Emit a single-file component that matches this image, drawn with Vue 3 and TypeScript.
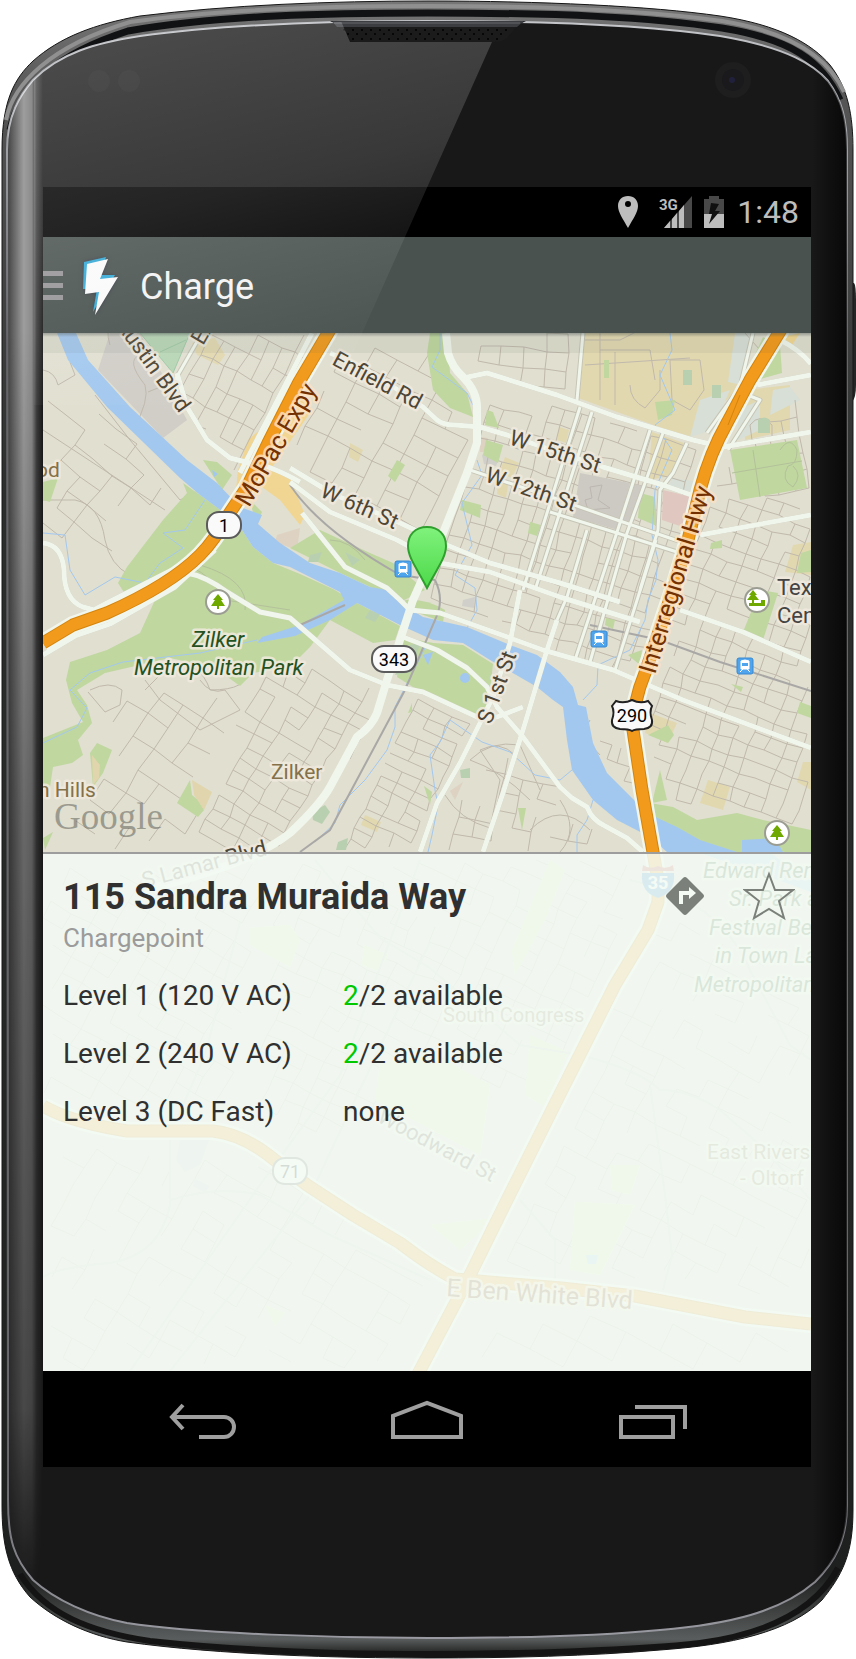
<script setup lang="ts">
import { ref } from 'vue'

type Point = [number, number]

interface District {
  outline: Point[]
  angle: number
  across: number
  down: number
  density: number
}

interface MapLabel {
  text: string
  x: number
  y: number
  turn?: number
  size?: number
  kind: 'road' | 'highway' | 'park' | 'area' | 'place'
}

interface ChargerLevel {
  name: string
  free: number
  total: number
}

const station = { title: '115 Sandra Muraida Way', network: 'Chargepoint' }
const levels: ChargerLevel[] = [
  { name: 'Level 1 (120 V AC)', free: 2, total: 2 },
  { name: 'Level 2 (240 V AC)', free: 2, total: 2 },
  { name: 'Level 3 (DC Fast)', free: 0, total: 0 },
]
const favourite = ref(false)

const districts: District[] = [
  { outline: [[188, 333], [328, 333], [238, 478], [176, 410]], angle: 28, across: 14, down: 22, density: 0.88 },
  { outline: [[326, 340], [428, 350], [474, 420], [474, 470], [440, 545], [290, 468]], angle: 27, across: 25, down: 20, density: 0.82 },
  { outline: [[462, 333], [583, 333], [577, 400], [480, 375]], angle: 5, across: 22, down: 18, density: 0.85 },
  { outline: [[480, 385], [700, 445], [686, 540], [640, 680], [545, 652], [420, 600], [450, 520]], angle: 17, across: 15, down: 17, density: 0.9 },
  { outline: [[700, 500], [811, 485], [811, 830], [665, 800], [643, 720], [676, 590]], angle: 20, across: 17, down: 15, density: 0.86 },
  { outline: [[725, 450], [811, 385], [811, 500], [700, 500]], angle: -10, across: 15, down: 18, density: 0.8 },
  { outline: [[412, 692], [476, 718], [415, 852], [330, 852]], angle: 26, across: 19, down: 12, density: 0.82 },
  { outline: [[470, 780], [520, 740], [600, 830], [600, 852], [440, 852]], angle: 12, across: 19, down: 17, density: 0.6 },
  { outline: [[290, 655], [384, 690], [372, 730], [280, 852], [190, 852], [240, 690]], angle: 30, across: 19, down: 14, density: 0.8 },
  { outline: [[100, 690], [235, 690], [215, 780], [190, 852], [43, 852], [110, 760]], angle: 34, across: 24, down: 26, density: 0.68 },
  { outline: [[43, 400], [80, 380], [180, 490], [125, 570], [43, 530]], angle: 38, across: 24, down: 20, density: 0.66 },
  { outline: [[590, 725], [628, 735], [645, 800], [610, 770]], angle: 16, across: 12, down: 16, density: 0.8 },
  { outline: [[43, 870], [270, 853], [240, 1115], [43, 1100]], angle: 30, across: 22, down: 19, density: 0.75 },
  { outline: [[280, 860], [640, 860], [620, 940], [560, 1070], [300, 1150], [250, 1110]], angle: 25, across: 21, down: 17, density: 0.72 },
  { outline: [[43, 1140], [260, 1155], [430, 1275], [400, 1371], [43, 1371]], angle: 30, across: 25, down: 22, density: 0.6 },
  { outline: [[670, 890], [811, 1000], [811, 1300], [480, 1270], [560, 1110]], angle: 27, across: 24, down: 21, density: 0.6 },
  { outline: [[480, 1295], [811, 1335], [811, 1371], [440, 1371]], angle: 28, across: 38, down: 30, density: 0.7 },
]

function contains(outline: Point[], x: number, y: number): boolean {
  let inside = false
  for (let i = 0, j = outline.length - 1; i < outline.length; j = i++) {
    const [xi, yi] = outline[i]
    const [xj, yj] = outline[j]
    if (yi > y !== yj > y && x < ((xj - xi) * (y - yi)) / (yj - yi) + xi) inside = !inside
  }
  return inside
}

// Street blocks: a turned grid whose crossings are shifted slightly and some of whose sides are left out.
function streetPath(d: District, seed: number): string {
  let state = seed * 7919 + 17
  const random = () => {
    state = (state * 1103515245 + 12345) % 2147483648
    return state / 2147483648
  }
  const xs = d.outline.map((p) => p[0])
  const ys = d.outline.map((p) => p[1])
  const cx = (Math.min(...xs) + Math.max(...xs)) / 2
  const cy = (Math.min(...ys) + Math.max(...ys)) / 2
  const reach = Math.max(Math.max(...xs) - Math.min(...xs), Math.max(...ys) - Math.min(...ys))
  const cols = Math.ceil(reach / d.across)
  const rows = Math.ceil(reach / d.down)
  const a = (d.angle * Math.PI) / 180
  const nodes: Point[][] = []
  for (let r = -rows; r <= rows; r++) {
    const line: Point[] = []
    for (let c = -cols; c <= cols; c++) {
      const u = c * d.across + (random() - 0.5) * 3
      const v = r * d.down + (random() - 0.5) * 3
      line.push([
        Math.round(cx + u * Math.cos(a) - v * Math.sin(a)),
        Math.round(cy + u * Math.sin(a) + v * Math.cos(a)),
      ])
    }
    nodes.push(line)
  }
  const parts: string[] = []
  const join = (p: Point, q: Point | undefined) => {
    if (!q || random() > d.density) return
    if (contains(d.outline, ...p) && contains(d.outline, ...q)) parts.push(`M${p[0]} ${p[1]}L${q[0]} ${q[1]}`)
  }
  nodes.forEach((line, r) =>
    line.forEach((p, c) => {
      join(p, line[c + 1])
      join(p, nodes[r + 1]?.[c])
    }),
  )
  return parts.join('')
}

const streets = districts.map((d, i) => streetPath(d, i + 1))

const mainRoads: string[] = [
  'M480 427L507 435L603 467L663 485L697 497',
  'M330 353L360 366L398 390L423 407L437 420Q443 425 455 425L480 427',
  'M463 378L487 373L557 395L617 417L693 440L723 447L811 432',
  'M290 468L333 494L400 523L447 545L490 563L560 583L620 602',
  'M290 482L330 512L397 540L440 563L490 572L560 597L640 622',
  'M302 513L345 567L387 588L400 600L410 610L440 613L510 638L543 650L613 670L683 700L811 748',
  'M403 637L437 650L467 668L487 687L497 707L523 737L560 787L572 798L587 807Q592 820 605 826L627 838L643 852',
  'M523 707L497 717H477L423 692L387 685L350 670L290 618L260 612L227 592Q205 576 187 573L172 578',
  'M520 590L510 643L493 697L480 723L460 763L437 803L420 852',
  'M557 620L547 650L523 730L503 793L483 852',
  'M680 610L743 632L811 662M700 535L811 515M757 385L811 375M780 340Q800 350 811 364',
  'M177 373L187 407L207 440L230 458L250 463Q270 465 300 482',
  'M312 333L240 473M43 543Q62 545 64 570Q64 600 83 607L105 613M43 637L105 604L172 570',
  'M43 655L75 636L110 624L175 587L215 550',
]

const cityRoads: string[] = [
  'M470 470L560 500L617 520L690 545M550 512L617 533L677 552',
  'M580 407L523 590M592 412L535 590M583 333L577 400',
  'M587 530L567 597L557 620M650 430L620 523L575 660M663 433L627 533L590 662M656 540L615 670',
  'M753 333L740 387L707 433M687 443L673 473L660 490L658 530L640 590',
  'M720 435L700 498M735 390L760 400L728 450',
  'M202 333L175 380',
]

const labels: MapLabel[] = [
  { text: 'Austin Blvd', x: 115, y: 325, turn: 54, kind: 'road' },
  { text: 'Ex', x: 203, y: 346, turn: -60, kind: 'road' },
  { text: 'MoPac Expy', x: 249, y: 508, turn: -60, size: 25, kind: 'highway' },
  { text: 'Enfield Rd', x: 331, y: 364, turn: 28, kind: 'road' },
  { text: 'W 15th St', x: 508, y: 444, turn: 18, kind: 'road' },
  { text: 'W 12th St', x: 484, y: 481, turn: 19, kind: 'road' },
  { text: 'W 6th St', x: 319, y: 496, turn: 24, kind: 'road' },
  { text: 'S 1st St', x: 491, y: 725, turn: -70, kind: 'road' },
  { text: 'Interregional Hwy', x: 655, y: 675, turn: -73, size: 25, kind: 'highway' },
  { text: 'S Lamar Blvd', x: 144, y: 888, turn: -15, kind: 'road' },
  { text: 'Zilker', x: 192, y: 647, kind: 'park' },
  { text: 'Metropolitan Park', x: 134, y: 675, kind: 'park' },
  { text: 'Zilker', x: 271, y: 779, size: 21, kind: 'area' },
  { text: 'n Hills', x: 38, y: 797, size: 21, kind: 'area' },
  { text: 'od', x: 36, y: 477, size: 21, kind: 'area' },
  { text: 'Tex', x: 777, y: 595, kind: 'place' },
  { text: 'Cen', x: 777, y: 623, kind: 'place' },
  { text: 'Edward Ren', x: 703, y: 878, kind: 'park' },
  { text: 'Sr. Park a', x: 729, y: 906, kind: 'park' },
  { text: 'Festival Be', x: 709, y: 935, kind: 'park' },
  { text: 'in Town La', x: 715, y: 963, kind: 'park' },
  { text: 'Metropolitan', x: 694, y: 992, kind: 'park' },
  { text: 'South Congress', x: 443, y: 1022, size: 20, kind: 'area' },
  { text: 'East Riversi', x: 707, y: 1159, size: 21, kind: 'area' },
  { text: '- Oltorf', x: 740, y: 1185, size: 21, kind: 'area' },
  { text: 'Woodward St', x: 376, y: 1121, turn: 28, kind: 'road' },
  { text: 'E Ben White Blvd', x: 446, y: 1296, turn: 4, size: 25, kind: 'highway' },
]

const trainStops: Point[] = [[403, 569], [599, 639], [745, 666]]
const parkPins: Point[] = [[218, 602], [777, 833]]

const highways: string[] = [
  'M331 328L299 382L268 443L247 487L227 517Q215 540 200 555Q170 585 107 613L73 625L43 643',
  'M782 328L750 380L727 423Q710 453 700 490L688 540L673 590L645 673Q633 702 633 730L642 790L653 852L658 880V902L648 930L615 985L555 1104L508 1198L468 1279L418 1374',
  'M43 1106Q70 1122 127 1131H213Q240 1134 267 1154L307 1185L353 1215L400 1243Q430 1266 455 1279L561 1288L635 1296L745 1317L811 1324',
]

const outerShell =
  'M2 150C2 100 15 78 33 61C60 37 95 24 140 16C230 5 330 1 428 1C540 1 650 6 720 16C780 25 812 44 830 65C848 88 853 115 853 150V1510C853 1555 842 1575 822 1600C790 1632 730 1645 660 1650C590 1656 510 1658 428 1658C340 1658 220 1655 127 1642C90 1636 55 1620 30 1597C8 1572 2 1545 2 1505Z'
const glass =
  'M7 150C7 115 20 95 33 80C60 53 95 43 140 36C220 25 327 21 428 21C560 21 660 27 720 36C790 48 815 66 828 81C842 100 847 120 847 150V1505C847 1540 835 1562 815 1582C780 1612 730 1624 660 1630C590 1637 510 1638 428 1638C340 1638 200 1634 127 1623C90 1616 55 1600 33 1580C14 1558 8 1540 8 1500Z'
</script>

<template>
  <main class="phone">
    <svg class="case" viewBox="0 0 856 1659" preserveAspectRatio="none" aria-hidden="true">
      <defs>
        <linearGradient id="rim" gradientUnits="userSpaceOnUse" x1="0" y1="0" x2="0" y2="1659">
          <stop offset="0" stop-color="#777" />
          <stop offset="0.06" stop-color="#555" />
          <stop offset="0.3" stop-color="#2c2d2d" />
          <stop offset="0.95" stop-color="#1e1f1f" />
          <stop offset="0.988" stop-color="#5a5d5d" />
          <stop offset="1" stop-color="#0c0c0c" />
        </linearGradient>
        <linearGradient id="edge" x1="0" y1="0" x2="0" y2="1">
          <stop offset="0" stop-color="#c4c6ca" />
          <stop offset="0.2" stop-color="#66666a" />
          <stop offset="0.9" stop-color="#66666a" />
          <stop offset="1" stop-color="#9a9aa2" />
        </linearGradient>
        <linearGradient id="side" x1="0" y1="0" x2="1" y2="0">
          <stop offset="0" stop-color="#fff" stop-opacity="0.2" />
          <stop offset="0.45" stop-color="#fff" stop-opacity="0.58" />
          <stop offset="0.68" stop-color="#fff" stop-opacity="0.5" />
          <stop offset="0.82" stop-color="#fff" stop-opacity="0.16" />
          <stop offset="1" stop-color="#fff" stop-opacity="0" />
        </linearGradient>
        <linearGradient id="sideFade" x1="0" y1="0" x2="0" y2="1">
          <stop offset="0" stop-color="#fff" />
          <stop offset="0.2" stop-color="#fff" />
          <stop offset="0.5" stop-color="#999" />
          <stop offset="0.85" stop-color="#5c5c5c" />
          <stop offset="0.96" stop-color="#000" />
        </linearGradient>
        <linearGradient id="shade" x1="0" y1="0" x2="1" y2="0">
          <stop offset="0" stop-color="#000" stop-opacity="0" />
          <stop offset="1" stop-color="#000" stop-opacity="0.7" />
        </linearGradient>
        <mask id="sideMask"><rect width="856" height="1659" fill="url(#sideFade)" /></mask>
        <clipPath id="glassClip"><path :d="glass" /></clipPath>
        <pattern id="grille" width="9" height="9" patternUnits="userSpaceOnUse">
          <circle cx="2" cy="3" r="1" fill="#000" />
          <circle cx="6" cy="7" r="1" fill="#000" />
        </pattern>
      </defs>
      <path d="M851 283H854Q856 285 856 300V385Q856 398 852 402Z" fill="#262626" />
      <path :d="outerShell" fill="url(#rim)" stroke="#161616" />
      <path d="M10 130C18 92 50 56 128 31C220 15 330 13 428 13C560 13 650 17 722 28C790 39 822 60 840 100" fill="none" stroke="#111214" stroke-width="7" />
      <path d="M6 120C13 84 50 46 130 22C220 9 330 6 428 6C560 6 650 11 722 21C790 32 828 56 844 92" fill="none" stroke="#909090" stroke-width="4" />
      <path d="M20 1574C45 1614 90 1632 150 1641C250 1652 350 1654 428 1654C520 1654 640 1650 700 1643C780 1632 820 1602 838 1568" fill="none" stroke="#141414" stroke-width="6" />
      <path :d="glass" fill="#181818" stroke="url(#edge)" stroke-width="2" />
      <g clip-path="url(#glassClip)">
        <rect x="8" y="20" width="35" height="1620" fill="url(#side)" mask="url(#sideMask)" />
        <rect x="812" y="20" width="36" height="1600" fill="url(#shade)" />
      </g>
      <path d="M330 21L336 24L350 39Q353 42 360 42H494Q504 42 508 37L518 25L526 21Z" fill="#1b1b1b" />
      <path d="M342 29H512L503 41H353Z" fill="url(#grille)" />
      <path d="M332 21H524L517 27H337Z" fill="#3b3d40" />
      <path d="M334 23H520" stroke="#66686c" />
      <circle cx="99" cy="81" r="11" fill="#1d1d1d" />
      <circle cx="129" cy="81" r="11" fill="#1d1d1d" />
      <circle cx="733" cy="80" r="18" fill="#1e1e1e" />
      <circle cx="733" cy="80" r="11" fill="#1a1a1d" />
      <circle cx="732" cy="80" r="3" fill="#20203c" />
    </svg>

    <section class="screen">
      <header class="status">
        <svg class="glyph" width="22" height="34" viewBox="0 0 22 34" role="img" aria-label="Location in use">
          <path fill="#bdbdbd" fill-rule="evenodd" d="M11 1C17 1 21 5 21 11C21 17 16 24 11 33C6 24 1 17 1 11C1 5 5 1 11 1ZM11 6A3 3 0 1 0 11 12A3 3 0 1 0 11 6Z" />
        </svg>
        <svg class="glyph" width="34" height="34" viewBox="0 0 34 34" role="img" aria-label="3G signal">
          <path d="M5 33L33 1V33Z" fill="#484848" />
          <path d="M5 33L11 26V33ZM13 33V24L18 18V33ZM20 33V16L25 10V33Z" fill="#bdbdbd" />
          <text x="0" y="15" font-size="15" font-weight="700" fill="#bdbdbd">3G</text>
        </svg>
        <svg class="glyph" width="22" height="34" viewBox="0 0 22 34" role="img" aria-label="Battery charging">
          <path d="M6 1H16V4H21V33H1V4H6Z" fill="#484848" />
          <path d="M1 19H21V33H1Z" fill="#bdbdbd" />
          <path d="M8 8L16 9L12 16H17L6 29L9 19H6Z" fill="#111" />
        </svg>
        <time>1:48</time>
      </header>

      <header class="bar">
        <button class="menu" type="button" aria-label="Open menu">
          <svg width="20" height="30" viewBox="0 0 20 30"><path d="M0 0H20V5H0ZM0 12H20V17H0ZM0 24H20V29H0Z" fill="#969496" /></svg>
          <svg class="bolt" width="40" height="62" viewBox="80 254 40 62">
            <path d="M84 261L106 256L100 274L115 274L93 311L97 288L83 288Z" fill="#33a9d6" />
            <path d="M87 263L108 258L100 278L118 276L95 314L99 291L85 293Z" fill="#fafafa" />
          </svg>
        </button>
        <h1>Charge</h1>
      </header>

      <div class="stage">
        <svg class="map" viewBox="43 333 768 1038" preserveAspectRatio="xMidYMin slice" role="img" aria-label="Map of Austin">
          <defs>
            <linearGradient id="pin" x1="0" y1="0" x2="0" y2="1">
              <stop offset="0" stop-color="#80f27c" />
              <stop offset="1" stop-color="#4dd94a" />
            </linearGradient>
            <linearGradient id="under" x1="0" y1="0" x2="0" y2="1">
              <stop offset="0" stop-color="#4a5350" stop-opacity="0.45" />
              <stop offset="1" stop-color="#4a5350" stop-opacity="0" />
            </linearGradient>
            <g id="train">
              <rect x="-8" y="-8" width="16" height="16" rx="2" fill="#4fa4ee" stroke="#3b8ad0" />
              <path d="M-4 -5Q0 -7 4 -5V3H-4ZM-5 6L-2 3M5 6L2 3" fill="#fff" stroke="#fff" />
              <path d="M-3 -3H3V0H-3Z" fill="#4fa4ee" />
            </g>
            <g id="tree">
              <circle r="12" fill="#fff" stroke="#9b9d92" stroke-width="2" />
              <path d="M0 -8L5 -2H3L7 4H1V7H-1V4H-7L-3 -2H-5Z" fill="#6fa900" />
            </g>
          </defs>

          <rect x="43" y="333" width="768" height="1038" fill="#e0dfd0" />

          <g class="land">
            <path d="M110 333H140L187 420L163 438L98 370Z" fill="#d1cec8" />
            <path d="M583 333H740L745 385L712 412L690 438L578 398ZM652 432L684 443L670 476L648 480ZM745 390L790 385L790 430L745 440ZM793 545L811 542V575L785 572Z" fill="#e2d8b0" />
            <path d="M192 343L215 338L225 355L218 365L197 355ZM350 443L363 450L358 462L349 457ZM505 457L519 463L512 478L499 473ZM498 482L508 485L506 498L497 494ZM559 427L569 430L566 443L557 440ZM708 780L730 787L723 810L700 803ZM650 713L677 723L668 743L645 733ZM803 762H811V790L797 782ZM365 815L381 822L377 832L361 825Z" fill="#e2d8b0" />
            <path d="M735 333H755L742 385L728 382ZM700 400L730 390L712 430L690 437ZM738 410L760 400V430L738 440ZM773 390L790 387L800 400L770 415ZM672 478L698 482L697 493L668 488Z" fill="#d7dfd6" />
            <path d="M248 440L300 395L312 410L270 470L250 476L235 500L238 470ZM270 470L290 478L305 515L300 525L280 500L262 487L240 492ZM800 333L790 348L778 338Z" fill="#f0d692" />
            <path d="M277 535L300 528L297 550L275 542ZM450 791L463 782L455 800ZM480 437L488 438L488 452L480 452Z" fill="#ded2c2" />
            <path d="M482 455Q490 450 500 456L496 466L484 464ZM463 600L475 597L474 608L462 606Z" fill="#d0cfca" />
          </g>

          <g class="minor">
            <path v-for="(d, i) in streets" :key="i" :d="d" />
            <path d="M43 500H75Q100 505 105 540Q110 565 130 575M43 370Q55 372 58 385M58 385L75 375L70 362M95 395L130 440L180 500L200 490M43 430L165 510" />
            <path d="M133 430Q150 400 145 385Q125 360 140 355M148 392L165 385L180 410M110 345Q105 330 112 320" />
            <path d="M90 690Q110 680 122 690L120 705L105 712L88 692M200 680Q210 695 225 690L240 710L200 730L160 700L145 680" />
            <path d="M145 690L170 665Q200 660 210 690Q250 690 245 670" />
            <path d="M530 800Q500 770 470 760Q490 740 520 745L540 790M445 795Q460 820 490 828L500 780L480 750Q500 740 515 755" />
            <path d="M530 830Q560 800 590 830M560 800Q580 830 560 852M590 720Q580 735 600 755" />
            <path d="M580 340H620L640 330M600 350H650L655 380M630 385Q630 400 645 408L660 390V370M670 360H700L704 390L690 410L672 400ZM745 333L760 350M585 365L690 358M600 333V400M615 352V405" />
            <path d="M750 425Q760 412 772 425V437L752 440Z" />
          </g>
          <path d="M580 473L630 483L618 530L573 517ZM632 483L646 487L632 526L621 522Z" fill="#cdcac4" />
          <path d="M663 490L692 497L683 527L662 520Z" fill="#e0c7c0" />
          <path d="M590 487L602 485L598 500L610 508L588 510L585 500L592 498Z" fill="none" stroke="#bcb7b0" />

          <g fill="#c0d7a0">
            <path d="M183 483L200 495L223 512L242 530L253 547L273 563L300 574L333 589L357 603L400 626L395 640L373 643L330 620L310 647L290 667L253 673L240 686L215 668L170 658L105 673L77 690L87 705L92 723L78 740L83 755L72 763L53 767L50 787H43V738L83 722L72 703L66 680L70 662L107 650L140 633L155 600L127 597L118 583L127 567L163 520L187 493Z" />
            <path d="M427 353L430 333H447L450 373L467 393L473 417L450 408L433 390ZM203 460L217 462L232 475L222 490ZM43 482L58 478L50 502L43 500Z" />
            <path d="M250 500L262 512L256 525ZM290 548L320 530L370 553L393 563L425 590L400 602L370 587L340 573Z" />
            <path d="M405 600Q425 598 445 610L443 622L407 609Z" />
            <path d="M403 637L433 643L463 645L493 664L487 717L470 712L413 687L397 677Z" />
            <path d="M397 460L405 465L395 482L388 476ZM462 500L481 505L480 518L460 510ZM530 522L541 525L537 536L528 533ZM486 440L503 445L498 463L483 455ZM487 410L493 412L499 428L485 425Z" />
            <path d="M730 450L797 440L807 488L740 500ZM763 337L780 345L782 373L757 380L748 370ZM640 493L655 497L657 526L638 518ZM655 402L675 400L672 415L658 420ZM711 543L722 540V548L710 549ZM801 553L811 550V572L797 573ZM604 360H609V378H604Z" />
            <path d="M760 590L778 593L763 640L743 632ZM628 655L642 650L640 665ZM731 684L743 687L741 692ZM800 702L811 706V718L797 713ZM606 618L615 620L613 629L605 625Z" />
            <path d="M650 803L673 807L697 820L737 813L763 820L811 830V852H700L690 845L650 820ZM660 770L667 800L652 803ZM668 725L674 735L668 743L648 735Z" />
            <path d="M97 743L112 750L103 773L93 787L90 753ZM190 780L192 795L198 800L204 810L198 817L177 803ZM43 838L53 832L45 850ZM424 786L432 792L430 805ZM518 808H526L522 830ZM408 713L412 703V712Z" />
          </g>
          <path d="M250 928L290 925L300 940L290 967L250 945ZM364 945L388 955L378 971L362 965ZM380 1064L430 1052L490 1085L480 1155L375 1100ZM530 1035L568 1052L545 1107L525 1095ZM575 1202L635 1205L600 1275L570 1270ZM430 1225L495 1218L460 1250ZM550 860L565 870L545 920L515 975L512 950ZM265 1305L285 1313L275 1326ZM610 1165L640 1165L630 1195L612 1190Z" fill="#dfe6a8" />
          <path d="M180 1140L210 1138L200 1165L185 1172L176 1160ZM194 1178L210 1186L205 1193L193 1186Z" fill="#cfc4cc" />
          <path d="M140 333H190L173 373ZM160 352L186 340" fill="#b8d6b6" stroke="#9fc8a6" />
          <path d="M92 755L100 765L99 778L93 785ZM192 780L212 792L204 810L194 795Z" fill="#e0d5ac" />
          <path d="M683 370H692V385H683ZM712 385H721V398H712ZM758 420Q765 415 770 420V433H758ZM460 770L470 768V778L461 778ZM312 812L325 805L330 812L322 824L313 820ZM338 842L348 838L346 850H336ZM410 645L420 643L412 672L395 675ZM370 610L380 614L375 622L365 618ZM310 555L322 552L318 562L308 562ZM345 552L360 560L352 566Z" fill="#b9d0b0" />
          <path class="track" d="M753 450L760 497M732 473L802 461M780 450Q790 435 797 450Q797 465 788 466Q780 480 793 487Q803 475 793 466M180 570Q200 560 225 600L290 610M200 565Q250 580 245 610M330 540Q350 540 365 560" />

          <path d="M57 333H76L88 360L130 407L187 460L217 483L240 507L262 515L258 524L280 543L310 563L340 573L370 587L387 590L407 607L423 617L467 627L510 645L537 655L560 672L573 687L578 705L586 707L593 743L607 773L627 793L647 813L677 827L700 840L737 852H667L650 837L617 820L593 800L572 770L567 740L563 707L553 700L537 687L490 660L463 643L433 640L400 625L357 603L330 620L295 636L257 643L262 637L300 625L344 600L340 592L290 567L273 563L253 547L240 527L223 512L200 495L180 478L107 407L68 360Z" fill="#a3c8ef" />
          <path d="M742 840L775 838L783 852H742ZM423 655L433 652L428 665ZM460 678A5 5 0 1 0 470 678A5 5 0 1 0 460 678ZM212 470L218 474L214 477ZM586 1255H598L596 1264H588ZM700 853H770L811 880V892L750 870Z" fill="#a3c8ef" />
          <path class="creek" d="M257 640L200 653L123 662L90 673L70 690L87 708L77 727L43 743M205 500L185 530L163 533L183 548L160 563L145 583L115 577L85 595L70 570L65 535L43 533M440 333V350L432 367L467 393L473 405M477 460L482 475L462 503L472 545L455 575L475 588L477 610L467 628M425 648L395 707L395 727L387 750L365 780L340 805L335 823L315 842M450 720L440 742L430 755L435 790L438 805L432 835L428 852M450 720L482 742L510 752L535 775L560 780M670 333L672 350L660 375L675 410L655 425L672 450L655 490L652 535L658 560L656 580L648 600L645 620L630 650L598 665L597 685L583 700M560 780L572 770M593 800L587 820L577 835V852" />

          <path class="rail" d="M290 485Q320 530 400 575L435 580M435 580Q445 600 435 620L405 690L330 830L300 852M590 625L660 640L720 662L811 691M345 605L300 625" />

          <g class="casing"><path v-for="(d, i) in [...mainRoads, ...cityRoads]" :key="i" :d="d" /></g>
          <g class="city"><path v-for="(d, i) in cityRoads" :key="i" :d="d" /></g>
          <g class="main"><path v-for="(d, i) in mainRoads" :key="i" :d="d" /></g>
          <path class="avenue" d="M446 333L448 353Q452 367 463 377Q478 392 477 410V443L467 473L443 533L413 600L400 640L387 680L377 713Q372 726 357 737L330 787Q320 805 290 833Q250 865 144 890" />

          <g class="faint">
            <path d="M315 860L380 938L430 968L520 1045L580 1055Q640 1070 660 1090Q690 1090 720 1110L760 1145L811 1200" />
            <path d="M240 922L205 1055L170 1135V1205Q160 1255 110 1263Q60 1267 43 1277M430 942L310 1195L170 1371M650 1085L665 1195L672 1255L663 1290" />
            <path d="M630 880Q720 900 750 970L790 1045L811 1060M420 860L340 1075L260 1185L130 1371M520 1200L555 1240V1280M170 1200Q220 1185 260 1195L330 1235L430 1280" />
          </g>

          <g class="frontage"><path v-for="(d, i) in highways" :key="i" :d="d" /></g>
          <g class="highway-edge"><path v-for="(d, i) in highways" :key="i" :d="d" /></g>
          <g class="highway"><path v-for="(d, i) in highways" :key="i" :d="d" /></g>
          <path d="M740 395L728 425" stroke="#d4840c" fill="none" />

          <text
            v-for="(l, i) in labels"
            :key="i"
            :class="['label', l.kind]"
            :font-size="l.size ?? 22"
            :transform="`translate(${l.x} ${l.y}) rotate(${l.turn ?? 0})`"
          >{{ l.text }}</text>

          <g class="shield">
            <rect x="207" y="512" width="34" height="26" rx="12" />
            <text x="224" y="532">1</text>
            <rect x="372" y="646" width="44" height="26" rx="12" />
            <text x="394" y="666">343</text>
            <rect x="273" y="1158" width="34" height="26" rx="12" />
            <text x="290" y="1178">71</text>
            <path d="M612 706L616 701Q624 704 632 700Q640 704 648 701L652 706Q649 712 652 720Q653 728 644 729Q635 729 632 731Q629 729 620 729Q611 728 612 720Q615 712 612 706Z" />
            <text x="632" y="722">290</text>
          </g>
          <path d="M643 865Q650 870 658 866Q666 870 673 865L674 871H642Z" fill="#c6463c" />
          <path d="M642 873H674Q676 892 658 898Q640 892 642 873Z" fill="#2f7fd0" />
          <text x="658" y="889" font-size="18" font-weight="700" text-anchor="middle" fill="#fff">35</text>

          <use v-for="(p, i) in trainStops" :key="`t${i}`" href="#train" :x="p[0]" :y="p[1]" />
          <use v-for="(p, i) in parkPins" :key="`p${i}`" href="#tree" :x="p[0]" :y="p[1]" />
          <circle cx="757" cy="600" r="12" fill="#fff" stroke="#9b9d92" stroke-width="2" />
          <path d="M753 590L757 595H755L759 600H754V603H761V600H765V606H749V603H752V600H747L751 595H749Z" fill="#6fa900" />

          <path d="M427 527C439 527 446 535 446 546C446 558 436 570 427 588C418 570 408 558 408 546C408 535 415 527 427 527Z" fill="url(#pin)" stroke="#2f9f2d" stroke-width="2" />
          <text class="brand" x="54" y="829" font-size="37">Google</text>
          <rect x="43" y="333" width="768" height="4" fill="url(#under)" />
          <rect x="43" y="333" width="768" height="20" fill="#4a5350" opacity="0.08" />
        </svg>

        <section class="panel" aria-labelledby="station">
          <div class="heading">
            <div>
              <h2 id="station">{{ station.title }}</h2>
              <p>{{ station.network }}</p>
            </div>
            <div class="actions">
              <button type="button" aria-label="Directions">
                <svg width="40" height="40" viewBox="0 0 40 40">
                  <path d="M18 2Q20 0 22 2L38 18Q40 20 38 22L22 38Q20 40 18 38L2 22Q0 20 2 18Z" fill="#7b807a" />
                  <path d="M16 28V17H26" fill="none" stroke="#f4faf4" stroke-width="4" />
                  <path d="M24 11L31 17L24 23Z" fill="#f4faf4" />
                </svg>
              </button>
              <button type="button" aria-label="Favourite" :aria-pressed="favourite" @click="favourite = !favourite">
                <svg width="52" height="50" viewBox="0 0 52 50">
                  <path d="M26 3L32 19L50 19L36 30L41 47L26 38L11 47L16 30L2 19L20 19Z" :fill="favourite ? '#7b807a' : 'none'" stroke="#7b807a" stroke-width="2" />
                </svg>
              </button>
            </div>
          </div>
          <table>
            <tbody>
              <tr v-for="level in levels" :key="level.name">
                <th scope="row">{{ level.name }}</th>
                <td v-if="level.total"><span class="free">{{ level.free }}</span>/{{ level.total }} available</td>
                <td v-else>none</td>
              </tr>
            </tbody>
          </table>
        </section>
      </div>

      <nav class="keys" aria-label="System">
        <button type="button" aria-label="Back">
          <svg width="80" height="48" viewBox="0 0 80 48"><path d="M11 22H62A10 10 0 0 1 62 42H37M21 10L10 22L21 34" /></svg>
        </button>
        <button type="button" aria-label="Home">
          <svg width="80" height="48" viewBox="0 0 80 48"><path d="M6 42V21L40 8L74 21V42Z" /></svg>
        </button>
        <button type="button" aria-label="Recent apps">
          <svg width="80" height="48" viewBox="0 0 80 48"><path d="M9 22H61V42H9ZM23 12H73V34" /></svg>
        </button>
      </nav>
    </section>

    <svg class="case gloss" viewBox="0 0 856 1659" preserveAspectRatio="none" aria-hidden="true">
      <defs>
        <linearGradient id="shine" gradientUnits="userSpaceOnUse" x1="150" y1="0" x2="250" y2="400">
          <stop offset="0" stop-color="#fff" stop-opacity="0.23" />
          <stop offset="0.5" stop-color="#fff" stop-opacity="0.14" />
          <stop offset="1" stop-color="#fff" stop-opacity="0" />
        </linearGradient>
      </defs>
      <path clip-path="url(#glassClip)" d="M34 0H332L350 42H492L330 405H34Z" fill="url(#shine)" />
    </svg>
  </main>
</template>

<style>
body {
  margin: 0;
  background: #fff;
}
</style>

<style scoped>
.phone {
  position: relative;
  box-sizing: border-box;
  max-width: 856px;
  margin: 0 auto;
  padding: 187px 45px 192px 43px;
  font-family: Roboto, "Noto Sans", sans-serif;
}
.case {
  position: absolute;
  inset: 0;
  width: 100%;
  height: 100%;
}
.gloss {
  pointer-events: none;
}
.screen {
  position: relative;
  display: flex;
  flex-direction: column;
  background: #000;
}
.status {
  display: flex;
  align-items: center;
  justify-content: flex-end;
  height: 50px;
  padding-right: 12px;
  color: #bdbdbd;
}
.status time {
  font-size: 32px;
  line-height: 52px;
}
.glyph {
  margin-right: 10px;
}
.glyph:first-child {
  margin-right: 20px;
}
.glyph:nth-child(3) {
  margin-right: 12px;
}
.bar {
  display: flex;
  align-items: center;
  gap: 20px;
  height: 96px;
  background: #49524f;
  color: #f3f3f3;
}
.bar h1 {
  margin: 0;
  padding-top: 4px;
  font-size: 36px;
  font-weight: 400;
  line-height: 96px;
}
button {
  display: flex;
  align-items: center;
  justify-content: center;
  padding: 0;
  border: 0;
  background: none;
  cursor: pointer;
}
.menu {
  gap: 17px;
  padding-top: 2px;
}
.bolt {
  filter: drop-shadow(0 0 2px rgba(40, 40, 60, 0.6));
}
.stage {
  position: relative;
  display: flex;
  flex-direction: column;
  padding-top: 519px;
  overflow: hidden;
}
.map {
  position: absolute;
  inset: 0;
  width: 100%;
  height: 100%;
}
.minor path,
.track {
  fill: none;
  stroke: #c0b9ac;
  stroke-width: 1;
}
.track {
  stroke: #b3c19a;
}
.creek {
  fill: none;
  stroke: #a3c8ef;
}
.rail {
  fill: none;
  stroke: #aaa8a6;
  stroke-width: 2;
}
.casing path,
.city path,
.main path {
  fill: none;
  stroke: #c6c5b6;
  stroke-width: 5;
  stroke-linejoin: round;
}
.city path {
  stroke: #f1f6ec;
  stroke-width: 3;
}
.main path {
  stroke: #f1f6ec;
  stroke-width: 5;
}
.avenue {
  fill: none;
  stroke: #f1f6ec;
  stroke-width: 8;
  stroke-linejoin: round;
}
.faint path {
  fill: none;
  stroke: #c9c3c0;
  stroke-width: 2;
}
.frontage path,
.highway-edge path,
.highway path {
  fill: none;
  stroke: #f1f6ec;
  stroke-width: 18;
  stroke-linejoin: round;
}
.highway-edge path {
  stroke: #d4840c;
  stroke-width: 13;
}
.highway path {
  stroke: #f19a1c;
  stroke-width: 11;
}
.label {
  fill: #4d4535;
  stroke: rgba(240, 234, 222, 0.85);
  stroke-width: 5;
  stroke-linejoin: round;
  paint-order: stroke;
}
.label.highway {
  fill: #733000;
  stroke: rgba(252, 226, 196, 0.8);
}
.label.park {
  fill: #24521f;
  font-style: italic;
}
.label.area {
  fill: #84714a;
}
.label.place {
  fill: #444;
}
.shield rect,
.shield path {
  fill: #fafafa;
  stroke: #5b5b5b;
  stroke-width: 2;
}
.shield path {
  stroke: #222;
}
.shield text {
  font-size: 18px;
  text-anchor: middle;
}
.brand {
  font-family: "Liberation Serif", serif;
  fill: #55554e;
  fill-opacity: 0.5;
}
.panel {
  position: relative;
  box-sizing: border-box;
  min-height: 519px;
  padding: 20px 16px 20px 20px;
  border-top: 2px solid #9d9d9d;
  background: rgba(242, 250, 244, 0.88);
  color: #303030;
}
.heading {
  display: flex;
  justify-content: space-between;
}
.heading h2 {
  margin: 0;
  font-size: 36px;
  font-weight: 700;
  line-height: 46px;
}
.heading p {
  margin: 0;
  color: #9b9b9b;
  font-size: 26px;
  line-height: 36px;
}
.actions {
  display: flex;
  align-items: flex-start;
  gap: 38px;
}
.actions button {
  height: 44px;
}
table {
  margin-top: 11px;
  border-collapse: collapse;
  font-size: 28px;
  line-height: 58px;
}
th {
  width: 280px;
  padding: 0;
  font-weight: 400;
  text-align: left;
}
td {
  padding: 0;
}
.free {
  color: #00c800;
}
.keys {
  display: flex;
  justify-content: center;
  height: 96px;
}
.keys button {
  flex: 0 1 225px;
}
.keys path {
  fill: none;
  stroke: #9f9f9f;
  stroke-width: 4;
}
</style>
